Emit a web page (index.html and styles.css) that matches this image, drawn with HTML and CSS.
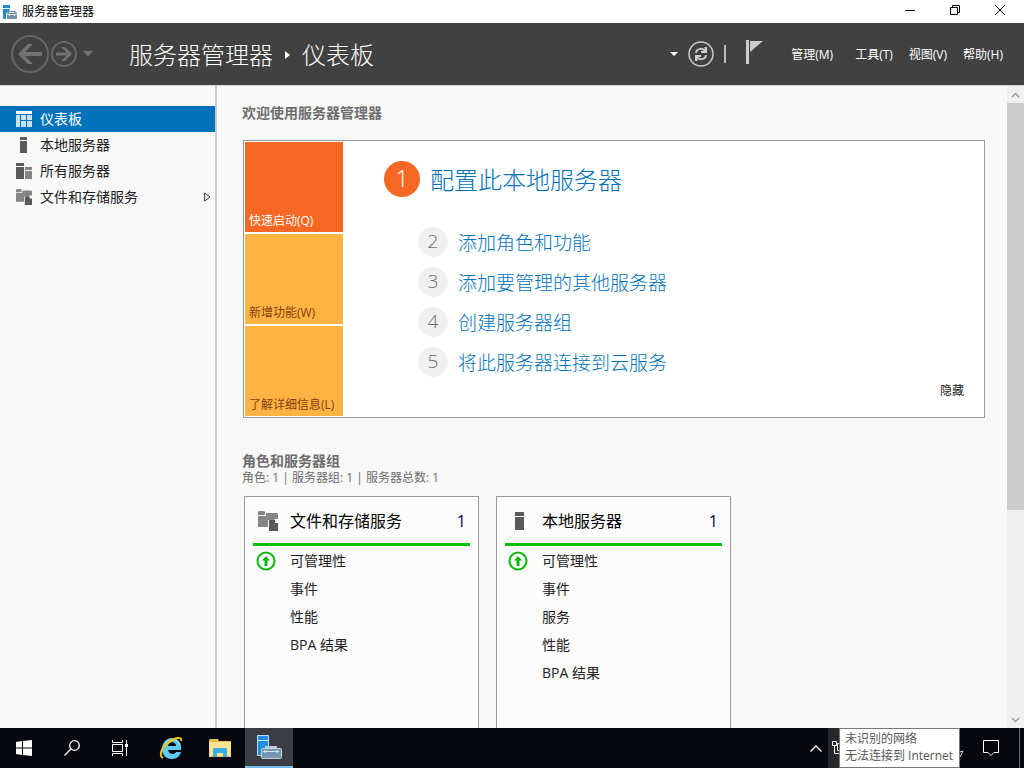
FILE: index.html
```html
<!DOCTYPE html>
<html lang="zh-CN">
<head>
<meta charset="utf-8">
<title>服务器管理器</title>
<link rel="stylesheet" href="styles.css">
</head>
<body>
<svg class="defs" aria-hidden="true">
  <symbol id="server" viewBox="0 0 16 16"><path fill="#5a5a5a" d="M4 0h7v3H4zM4 4h7v12H4z"/></symbol>
  <symbol id="server-large" viewBox="0 0 20 20"><path fill="#5a5a5a" d="M5 1h9v4H5zM5 6h9v13H5z"/></symbol>
  <symbol id="servers" viewBox="0 0 16 16"><path fill="#5a5a5a" d="M0 0h8v3H0zM0 4h8v12H0z"/><path fill="#858585" d="M9 4h7v3H9zM9 8h7v8H9z"/></symbol>
  <symbol id="storage" viewBox="0 0 20 20"><path fill="#858585" d="M0 1l1-1h5l1 1v3H0zM8 2h11l1 1v5h-3l-1 1h-6v7H0V5h8z"/><path fill="#5a5a5a" d="M11 9h6v3h3v8h-9z"/><path fill="#fcfcfc" d="M18 9l2 2h-2z"/></symbol>
  <symbol id="manager" viewBox="0 0 25 25"><path fill="#1f8fdc" stroke="#b8dcf5" d="M.5.5h11v20H.5z"/><path stroke="#d4ebfa" d="M1 5.500h10"/><path fill="none" stroke="#b9c9d4" stroke-width="2" d="M9 14v-2h10v2"/><rect x="4.500" y="13.500" width="20" height="10" rx="1" fill="#7297ae" stroke="#c3d3dd"/><path fill="none" stroke="#d8e4eb" d="M6 16.500h16M8 15v3M20 15v3"/></symbol>
  <symbol id="up" viewBox="0 0 20 20"><circle cx="10" cy="10" r="8.500" fill="#fff" stroke="#0bb90b" stroke-width="2"/><path fill="#0bb90b" d="M10 5l4 4.500h-2.500V15h-3V9.500H6z"/></symbol>
</svg>

<header class="titlebar">
  <svg class="app-icon" viewBox="0 0 14 14"><path fill="#1e8ad6" d="M0 0h7v3H0zM0 4h7v1L3 8v6H0z"/><path fill="#7193aa" d="M4 8l1-2h7l2 2v6H4z"/><path fill="#fff" d="M6 7h5v1H6z"/><path fill="none" stroke="#dbe5eb" d="M4 9.500h10M6.500 9v2M11.500 9v2"/></svg>
  <span class="app-name">服务器管理器</span>
  <div class="window-controls">
    <button aria-label="最小化"><svg viewBox="0 0 10 10"><path d="M0 5.500h10"/></svg></button>
    <button aria-label="还原"><svg viewBox="0 0 10 10"><path d="M.5 2.500h7v7h-7zM2.500 2V.5h7v7H8"/></svg></button>
    <button aria-label="关闭"><svg viewBox="0 0 10 10"><path d="M0 0l10 10M10 0L0 10"/></svg></button>
  </div>
</header>

<div class="banner">
  <nav class="history">
    <button class="back" aria-label="后退"><svg viewBox="0 0 38 38"><circle cx="19" cy="19" r="18" stroke-width="2"/><path fill="#737373" stroke="none" d="M7 19L17 9h5l-8 8h17v4H14l8 8h-5z"/></svg></button>
    <button class="forward" aria-label="前进"><svg viewBox="0 0 26 26"><circle cx="13" cy="13" r="12" stroke-width="2"/><path fill="#737373" stroke="none" d="M21 13l-7-7h-4l6 5.500H5v3h11L10 20h4z"/></svg></button>
    <button class="recent" aria-label="历史记录"><svg viewBox="0 0 10 6"><path fill="#737373" stroke="none" d="M0 0h10L5 6z"/></svg></button>
  </nav>
  <h1 class="crumbs"><span>服务器管理器</span><svg viewBox="0 0 5 8"><path fill="#fff" d="M0 0l5 4-5 4z"/></svg><span>仪表板</span></h1>
  <div class="tools">
    <button class="drop" aria-label="刷新选项"><svg viewBox="0 0 8 4"><path fill="#fff" d="M0 0h8L4 4z"/></svg></button>
    <button class="refresh" aria-label="刷新"><svg viewBox="0 0 26 26" fill="none" stroke="#ccc"><circle cx="13" cy="13" r="12" stroke-width="1.500"/><path stroke-width="1.800" d="M8 12c0-4 6-6 9-2M18 14c0 4-6 6-9 2"/><path fill="#ccc" stroke="none" d="M19 6v6h-6v-2h3.500V6zM7 20v-6h6v2H9.500v4z"/></svg></button>
    <span class="divider"></span>
    <button class="flag" aria-label="通知"><svg viewBox="0 0 17 24"><path fill="#ccc" d="M0 0h3v24H0zM4 1h13L4 12z"/></svg></button>
  </div>
  <nav class="menu">
    <button>管理(M)</button>
    <button>工具(T)</button>
    <button>视图(V)</button>
    <button>帮助(H)</button>
  </nav>
</div>

<div class="workspace">
  <nav class="sidebar">
    <a class="nav-item active" href="#"><svg viewBox="0 0 16 16"><path fill="#fff" d="M0 0h16v3H0z"/><path fill="#c5e2f4" d="M0 4h4v12H0zM5 4h5v5H5zM11 4h5v5h-5zM5 10h5v6H5zM11 10h5v6h-5z"/></svg><span>仪表板</span></a>
    <a class="nav-item" href="#"><svg><use href="#server"/></svg><span>本地服务器</span></a>
    <a class="nav-item" href="#"><svg><use href="#servers"/></svg><span>所有服务器</span></a>
    <a class="nav-item" href="#"><svg><use href="#storage"/></svg><span>文件和存储服务</span><svg class="expand" viewBox="0 0 7 10"><path fill="#fff" stroke="#333" d="M.7 1v8L6 5z"/></svg></a>
  </nav>

  <main class="content">
    <h2>欢迎使用服务器管理器</h2>
    <section class="welcome">
      <div class="tiles">
        <button class="tile selected">快速启动(Q)</button>
        <button class="tile">新增功能(W)</button>
        <button class="tile">了解详细信息(L)</button>
      </div>
      <div class="steps">
        <a class="step primary" href="#"><span class="number">1</span><span class="label">配置此本地服务器</span></a>
        <div class="more-steps">
          <a class="step" href="#"><span class="number">2</span><span class="label">添加角色和功能</span></a>
          <a class="step" href="#"><span class="number">3</span><span class="label">添加要管理的其他服务器</span></a>
          <a class="step" href="#"><span class="number">4</span><span class="label">创建服务器组</span></a>
          <a class="step" href="#"><span class="number">5</span><span class="label">将此服务器连接到云服务</span></a>
        </div>
        <button class="hide">隐藏</button>
      </div>
    </section>

    <h2>角色和服务器组</h2>
    <p class="summary">角色: 1 | 服务器组: 1 | 服务器总数: 1</p>
    <div class="cards">
      <article class="card">
        <header><svg><use href="#storage"/></svg><h3>文件和存储服务</h3><span>1</span></header>
        <ul>
          <li><svg><use href="#up"/></svg><a href="#">可管理性</a></li>
          <li><a href="#">事件</a></li>
          <li><a href="#">性能</a></li>
          <li><a href="#">BPA 结果</a></li>
        </ul>
      </article>
      <article class="card">
        <header><svg><use href="#server-large"/></svg><h3>本地服务器</h3><span>1</span></header>
        <ul>
          <li><svg><use href="#up"/></svg><a href="#">可管理性</a></li>
          <li><a href="#">事件</a></li>
          <li><a href="#">服务</a></li>
          <li><a href="#">性能</a></li>
          <li><a href="#">BPA 结果</a></li>
        </ul>
      </article>
    </div>
  </main>

  <div class="scrollbar">
    <button aria-label="向上滚动"><svg viewBox="0 0 9 6"><path d="M1 5l3.500-3.500L8 5"/></svg></button>
    <div class="track"><div class="thumb"></div></div>
    <button aria-label="向下滚动"><svg viewBox="0 0 9 6"><path d="M1 1l3.500 3.500L8 1"/></svg></button>
  </div>
</div>

<footer class="taskbar">
  <div class="system">
    <button aria-label="开始"><svg width="16" height="16" viewBox="0 0 16 16"><path fill="#fff" d="M0 2l6-1v6.500H0zM7 1l9-1v7.500H7zM0 8.500h6V15l-6-1zM7 8.500h9V16l-9-1z"/></svg></button>
    <button aria-label="搜索"><svg width="16" height="16" viewBox="0 0 16 16" fill="none" stroke="#fff" stroke-width="1.300"><circle cx="10.500" cy="5.500" r="4.800"/><path d="M7 9L.5 15.500"/></svg></button>
    <button aria-label="任务视图"><svg width="16" height="16" viewBox="0 0 16 16" fill="none" stroke="#fff"><path d="M.5 0v2.500h10V0M.5 16v-2.500h10V16M.5 4.500h10v7H.5zM14.500 0v16"/><path fill="#fff" stroke="none" d="M13 4h3v3h-3z"/></svg></button>
  </div>
  <div class="apps">
    <button aria-label="Internet Explorer"><svg width="24" height="24" viewBox="0 0 24 24"><path fill="#5ccbf3" fill-rule="evenodd" d="M13 2c6 0 10 5 9 12H9c1 5 7 5 8 2h5c-1 4-4 7-9 7-6 0-10-4-10-10S7 2 13 2zM9 10h8c0-5-7-5-8 0z"/><path fill="none" stroke="#b9ecfd" d="M6 8c3-6 12-7 15 1"/><path fill="none" stroke="#f4c51c" stroke-width="2" d="M4 22C-2 19 5 7 15 3c5-2 8-1 7 2"/></svg></button>
    <button aria-label="文件资源管理器"><svg width="22" height="18" viewBox="0 0 22 18"><path fill="#e9bd4c" d="M0 1l1-1h8l1 2h12v2H0z"/><path fill="#ffe394" d="M0 3h22v15H0z"/><path fill="#37afe3" d="M4 10l1-1h12l1 1v8h-4v-4H8v4H4z"/><path fill="#f5cb60" d="M0 17h4v1H0zM8 17h6v1H8zM18 17h4v1h-4z"/></svg></button>
    <button class="running" aria-label="服务器管理器"><svg width="25" height="25"><use href="#manager"/></svg></button>
  </div>
  <div class="tray">
    <button aria-label="显示隐藏的图标"><svg width="12" height="7" viewBox="0 0 12 7" fill="none" stroke="#fff" stroke-width="1.300"><path d="M.5 6.500L6 1l5.500 5.500"/></svg></button>
    <div class="network">
      <button aria-label="网络"><svg width="16" height="14" viewBox="0 0 16 14" fill="none" stroke="#fff"><path d="M.5.5h4v4h-4zM2.500 5v7.500H7M5.500 2.500h10v7h-10zM8 12.500h6"/></svg></button>
      <div class="tooltip" role="tooltip">未识别的网络<br>无法连接到 Internet</div>
    </div>
    <svg class="input-mode" width="16" height="16" viewBox="0 0 16 16"><path stroke="#ddd" d="M11 5l3-1-3 6"/></svg>
    <button class="actions" aria-label="操作中心"><svg width="16" height="16" viewBox="0 0 16 16" fill="none" stroke="#fff"><path d="M.5.5h15v12H11L8 15.500l-3-3H.5z"/></svg></button>
    <button class="desktop" aria-label="显示桌面"></button>
  </div>
</footer>
</body>
</html>
```

FILE: styles.css
```css
* { box-sizing: border-box; }

body {
  margin: 0;
  height: 100vh;
  display: flex;
  flex-direction: column;
  overflow: hidden;
  background: #f8f8f8;
  color: #222;
  font: 14px/20px "Open Sans", "Noto Sans CJK SC", sans-serif;
}

button {
  margin: 0;
  padding: 0;
  border: 0;
  background: none;
  color: inherit;
  font: inherit;
  display: flex;
  align-items: center;
  justify-content: center;
}

a { color: inherit; text-decoration: none; }
h1, h2, h3, p, ul { margin: 0; padding: 0; }
svg { display: block; flex: none; }
.defs { position: absolute; width: 0; height: 0; }

/* Title bar */
.titlebar {
  flex: none;
  height: 23px;
  display: flex;
  align-items: center;
  padding: 0 2px 0 3px;
  gap: 5px;
  background: #fff;
  color: #000;
  font-size: 12px;
}
.app-icon { width: 14px; height: 14px; }
.window-controls { display: flex; margin-left: auto; height: 100%; padding-bottom: 3px; }
.window-controls button { width: 45px; }
.window-controls svg { width: 10px; height: 10px; fill: none; stroke: #000; }

/* Banner */
.banner {
  flex: none;
  height: 62px;
  display: flex;
  align-items: center;
  padding: 0 21px 0 11px;
  background: #414141;
  color: #fff;
}
.history { display: flex; align-items: center; gap: 2px; width: 118px; }
.history svg { fill: none; stroke: #676767; }
.back svg { width: 38px; height: 38px; }
.forward svg { width: 26px; height: 26px; }
.recent { padding-left: 4px; }
.recent svg { width: 10px; height: 6px; }
.crumbs {
  display: flex;
  align-items: center;
  gap: 12px;
  padding-top: 2px;
  font-size: 24px;
  line-height: 32px;
  font-weight: 300;
}
.crumbs svg { width: 5px; height: 8px; }
.tools { display: flex; align-items: center; margin-left: auto; padding-right: 28px; }
.drop svg { width: 8px; height: 4px; }
.refresh { margin: 0 10px; }
.refresh svg { width: 26px; height: 26px; }
.divider { width: 2px; height: 18px; background: #bbb; }
.flag { margin-left: 20px; padding-bottom: 4px; }
.flag svg { width: 17px; height: 24px; }
.menu { display: flex; gap: 16px; padding-top: 2px; font-size: 12px; }
.menu button:first-child { margin-right: 6px; }

/* Workspace */
.workspace {
  flex: 1;
  min-height: 0;
  display: flex;
  border-top: 1px solid #d6d6d6;
}
.sidebar {
  flex: none;
  width: 217px;
  padding-top: 20px;
  border-right: 2px solid #ccc;
}
.nav-item {
  height: 26px;
  display: flex;
  align-items: center;
  gap: 8px;
  padding: 0 4px 0 16px;
}
.nav-item svg { width: 16px; height: 16px; }
.nav-item .expand { width: 7px; height: 10px; margin-left: auto; }
.nav-item.active { background: #0072bc; color: #fff; }

.content {
  flex: 1;
  min-width: 0;
  overflow: hidden;
  padding: 17px 22px 0 25px;
}
h2 { font-size: 14px; line-height: 20px; color: #6d6d6d; font-weight: 700; }

/* Welcome panel */
.welcome {
  display: flex;
  margin: 17px 0 33px 1px;
  padding: 1px;
  border: 1px solid #999;
  background: #fff;
}
.tiles { flex: none; width: 98px; display: grid; gap: 2px; }
.tile {
  height: 90px;
  align-items: flex-end;
  justify-content: flex-start;
  padding: 0 0 1px 4px;
  background: #ffb343;
  color: #81400f;
  font-size: 12px;
  white-space: nowrap;
}
.tile.selected { background: #f56723; color: #fff; }
.steps {
  flex: 1;
  display: flex;
  flex-direction: column;
  align-items: flex-start;
  padding: 19px 19px 0 41px;
}
.step {
  display: flex;
  align-items: center;
  gap: 10px;
  color: #0072bc;
  font-size: 19px;
  line-height: 28px;
  font-weight: 300;
}
.step.primary { font-size: 24px; line-height: 34px; }
.label { padding-top: 2px; }
.number {
  width: 30px;
  height: 30px;
  border-radius: 50%;
  background: #f0f0f0;
  color: #6d6d6d;
  text-align: center;
}
.primary .number { width: 36px; height: 36px; background: #f56723; color: #fff; }
.more-steps { display: grid; gap: 10px; margin: 30px 0 4px; padding-left: 34px; }
.hide { align-self: flex-end; font-size: 12px; }

/* Role cards */
.summary { font-size: 12px; line-height: 14px; color: #6d6d6d; }
.cards { display: flex; gap: 17px; margin: 11px 0 0 2px; }
.card {
  width: 235px;
  min-height: 320px;
  padding: 0 8px;
  border: 1px solid #999;
  background: #fcfcfc;
}
.card header {
  height: 49px;
  display: flex;
  align-items: center;
  gap: 12px;
  padding: 2px 4px 0 5px;
  border-bottom: 3px solid #00c000;
  color: #000;
  font-size: 16px;
}
.card header svg { width: 20px; height: 20px; }
.card header span { margin-left: auto; color: #000040; }
.card h3 { font-size: 16px; font-weight: 400; }
.card ul { list-style: none; }
.card li { position: relative; height: 28px; padding: 5px 0 3px 37px; }
.card li svg { position: absolute; left: 3px; top: 5px; width: 20px; height: 20px; }

/* Scroll bar */
.scrollbar { flex: none; width: 17px; display: flex; flex-direction: column; background: #f0f0f0; }
.scrollbar button { height: 17px; }
.scrollbar svg { width: 9px; height: 6px; fill: none; stroke: #999; stroke-width: 1.5; }
.track { flex: 1; }
.thumb { height: 67%; background: #cdcdcd; }

/* Task bar */
.taskbar {
  flex: none;
  height: 40px;
  display: flex;
  background: #06080d;
}
.system, .apps, .tray { display: flex; }
.system button, .apps button { width: 48px; }
.apps { gap: 1px; margin-left: 3px; }
.apps .running { background: #3b3d42; border-bottom: 2px solid #76b9ed; }
.tray { margin-left: auto; align-items: stretch; }
.tray > button { width: 24px; }
.network { position: relative; display: flex; width: 24px; background: #25272c; }
.network button { padding-left: 4px; }
.tooltip {
  position: absolute;
  left: 11px;
  top: 0;
  padding: 1px 6px 3px 5px;
  border: 1px solid #767676;
  background: #fff;
  color: #575757;
  font-size: 12px;
  line-height: 17px;
  white-space: nowrap;
}
.input-mode { align-self: center; margin: 14px 0 0 97px; }
.tray .actions { width: 48px; margin-left: 2px; }
.tray .desktop { width: 5px; margin-left: 4px; border-left: 1px solid #6a6c70; }
```
